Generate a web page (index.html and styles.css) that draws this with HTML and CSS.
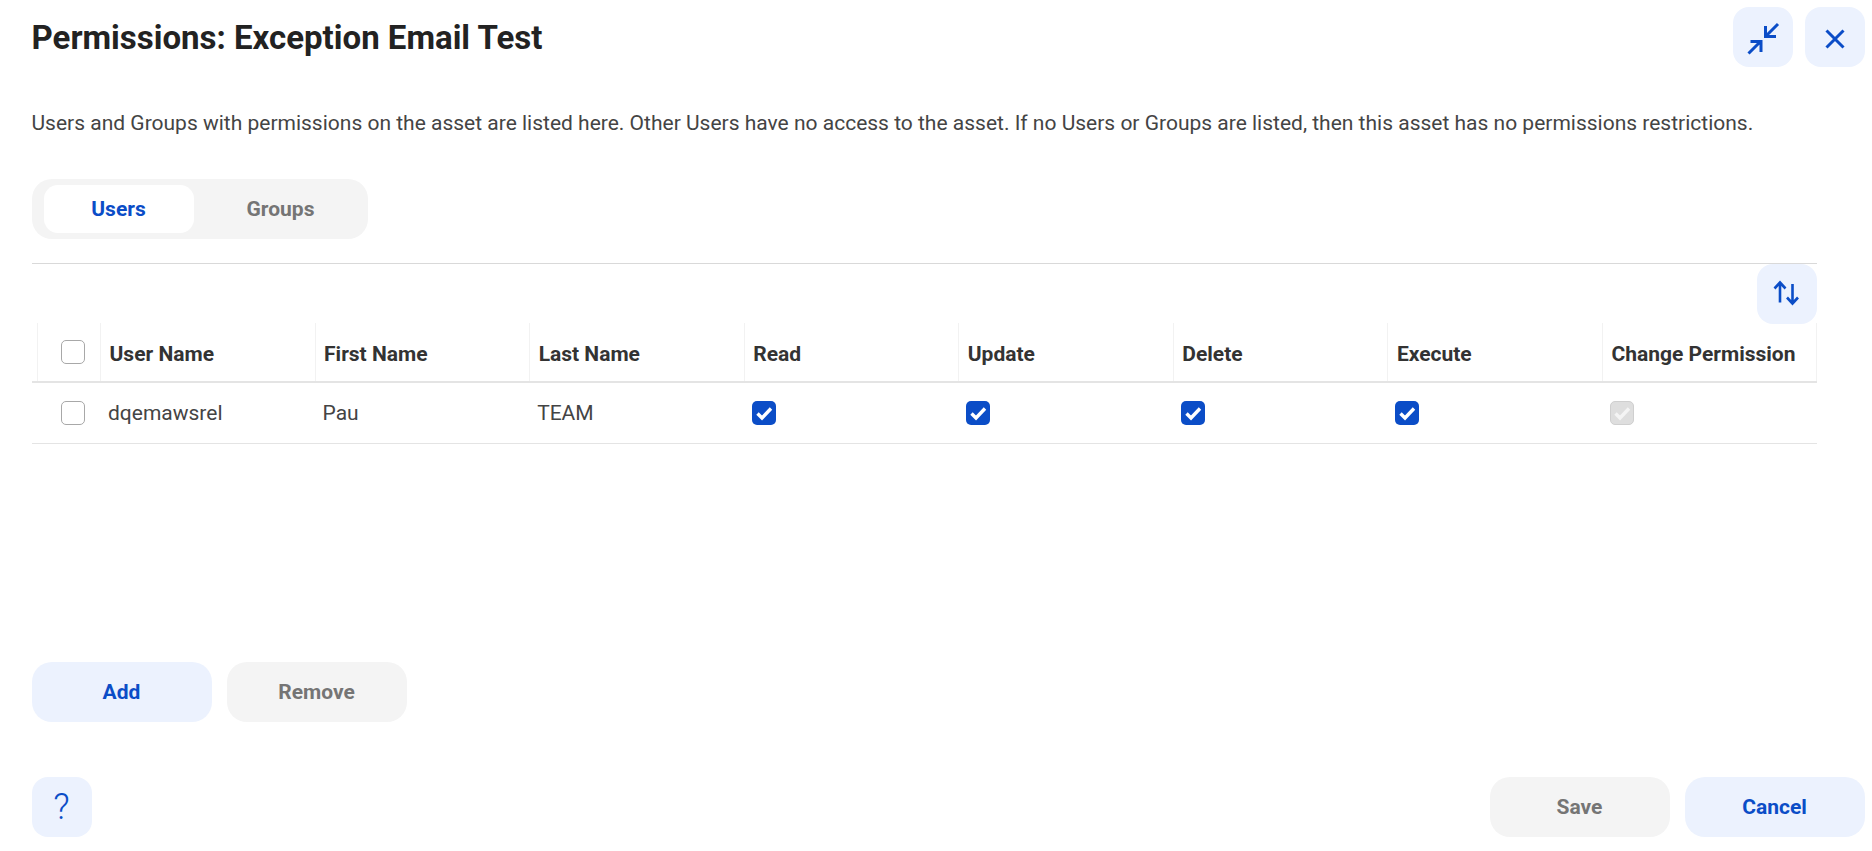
FILE: index.html
```html
<!DOCTYPE html>
<html lang="en">
<head>
<meta charset="utf-8">
<title>Permissions: Exception Email Test</title>
<link rel="stylesheet" href="styles.css">
</head>
<body>
<div class="dialog">
  <header class="top">
    <h1 class="title">Permissions: Exception Email Test</h1>
    <div class="top-actions">
      <button class="btn-icon" aria-label="Collapse">
        <svg class="ico" width="60" height="60" viewBox="0 0 60 60"><path d="M15.5 46.5 L27 35 M17.5 34.5 H28 V45 M45 17 L33.5 28.5 M32.5 19 V29.5 H43"/></svg>
      </button>
      <button class="btn-icon" aria-label="Close">
        <svg class="ico" width="60" height="60" viewBox="0 0 60 60"><path d="M21.5 23.5 L38.5 40.5 M38.5 23.5 L21.5 40.5"/></svg>
      </button>
    </div>
  </header>
  <p class="desc">Users and Groups with permissions on the asset are listed here. Other Users have no access to the asset. If no Users or Groups are listed, then this asset has no permissions restrictions.</p>
  <div class="tabs">
    <div class="tab tab-active">Users</div>
    <div class="tab">Groups</div>
  </div>
  <div class="panel">
    <div class="toolbar">
      <button class="btn-icon" aria-label="Sort">
        <svg class="ico ico-thin" width="60" height="60" viewBox="0 0 60 60"><path d="M23 38.5 V19 M17.5 24.5 L23 18.5 L28.5 24.5 M35.5 20 V39.5 M30 33.5 L35.5 39.5 L41 33.5"/></svg>
      </button>
    </div>
    <div class="grid grid-head">
      <div class="cell cell-check"><span class="cb"></span></div>
      <div class="cell">User Name</div>
      <div class="cell">First Name</div>
      <div class="cell">Last Name</div>
      <div class="cell">Read</div>
      <div class="cell">Update</div>
      <div class="cell">Delete</div>
      <div class="cell">Execute</div>
      <div class="cell">Change Permission</div>
    </div>
    <div class="grid grid-row">
      <div class="cell cell-check"><span class="cb"></span></div>
      <div class="cell">dqemawsrel</div>
      <div class="cell">Pau</div>
      <div class="cell">TEAM</div>
      <div class="cell"><span class="cb cb-on"><svg width="24" height="24" viewBox="0 0 24 24"><path d="M5.5 12.5 L10 17 L19 7.5"/></svg></span></div>
      <div class="cell"><span class="cb cb-on"><svg width="24" height="24" viewBox="0 0 24 24"><path d="M5.5 12.5 L10 17 L19 7.5"/></svg></span></div>
      <div class="cell"><span class="cb cb-on"><svg width="24" height="24" viewBox="0 0 24 24"><path d="M5.5 12.5 L10 17 L19 7.5"/></svg></span></div>
      <div class="cell"><span class="cb cb-on"><svg width="24" height="24" viewBox="0 0 24 24"><path d="M5.5 12.5 L10 17 L19 7.5"/></svg></span></div>
      <div class="cell"><span class="cb cb-off"><svg width="24" height="24" viewBox="0 0 24 24"><path d="M5.5 12.5 L10 17 L19 7.5"/></svg></span></div>
    </div>
  </div>
  <div class="row-actions">
    <button class="btn btn-blue">Add</button>
    <button class="btn btn-grey">Remove</button>
  </div>
  <footer class="foot">
    <button class="btn-icon btn-help" aria-label="Help">?</button>
    <div class="foot-right">
      <button class="btn btn-grey">Save</button>
      <button class="btn btn-blue">Cancel</button>
    </div>
  </footer>
</div>
</body>
</html>
```
FILE: styles.css
```css
* { box-sizing: border-box; }
html, body { margin: 0; height: 100%; background: #fff; }
body { font-family: Roboto, "Liberation Sans", sans-serif; color: #333; overflow: hidden; }
button { font-family: inherit; border: 0; padding: 0; cursor: pointer; }

.dialog { height: 851px; display: flex; flex-direction: column; padding: 7px 7.5px 14px 31.5px; }

.top { display: flex; justify-content: space-between; align-items: flex-start; height: 60px; }
.title { margin: 12px 0 0; font-size: 33px; line-height: 38px; font-weight: 700; color: #222; }
.top-actions { display: flex; gap: 12px; }

.btn-icon { width: 60px; height: 60px; border-radius: 16px; background: #ecf2fe; color: #0b4dc7; display: flex; align-items: center; justify-content: center; }
.ico { display: block; fill: none; stroke: #0b4dc7; stroke-width: 3; }
.ico-thin { stroke-width: 2.6; }
.btn-help { font-size: 36px; font-weight: 300; }

.desc { margin: 42px 0 0; font-size: 21px; line-height: 28px; color: #444; }

.tabs { margin-top: 42px; width: 336px; height: 60px; padding: 6px 12px; border-radius: 20px; background: #f4f4f4; display: flex; }
.tab { width: 150px; height: 48px; border-radius: 14px; display: flex; align-items: center; justify-content: center; font-size: 21px; font-weight: 700; color: #757575; }
.tab-active { background: #fff; color: #0b4dc7; }
.tab + .tab { margin-left: 12px; }

.panel { margin-top: 24px; width: 1785px; border-top: 1px solid #d9d9d9; }
.toolbar { display: flex; justify-content: flex-end; height: 59px; }

.grid { display: grid; grid-template-columns: 68.5px repeat(8, 1fr); }
.grid-head { height: 60px; border-bottom: 2px solid #e4e4e4; font-size: 21px; font-weight: 700; color: #333; }
.grid-row { height: 61px; border-bottom: 1px solid #e4e4e4; font-size: 21px; color: #444; }
.grid .cell { display: flex; align-items: center; padding-left: 8px; }
.grid-head .cell { padding: 3px 0 0 8.5px; border-left: 1px solid #f2f2f2; }
.grid-head .cell:last-child { border-right: 1px solid #f2f2f2; }
.grid .cell-check { padding: 0 0 0 23px; }
.grid-head .cell-check { margin-left: 5px; padding: 0 0 0 23px; }
.grid-row .cell-check { padding-left: 29px; }

.cb { width: 24px; height: 24px; border-radius: 5px; border: 1px solid #a8a8a8; background: #fff; display: block; }
.cb svg { display: block; fill: none; stroke: #fff; stroke-width: 3.4; }
.cb-on { background: #0b4dc7; border: 0; }
.cb-off { background: #dedede; border: 1px solid #cfcfcf; }
.cb-off svg { margin: -1px; stroke: #f4f4f4; }

.row-actions { margin-top: 218px; display: flex; gap: 15px; }
.btn { width: 180px; height: 60px; border-radius: 20px; font-size: 21px; font-weight: 700; }
.btn-blue { background: #ecf2fe; color: #0b4dc7; }
.btn-grey { background: #f4f4f4; color: #757575; }

.foot { margin-top: auto; display: flex; justify-content: space-between; }
.foot-right { display: flex; gap: 15px; }
```
